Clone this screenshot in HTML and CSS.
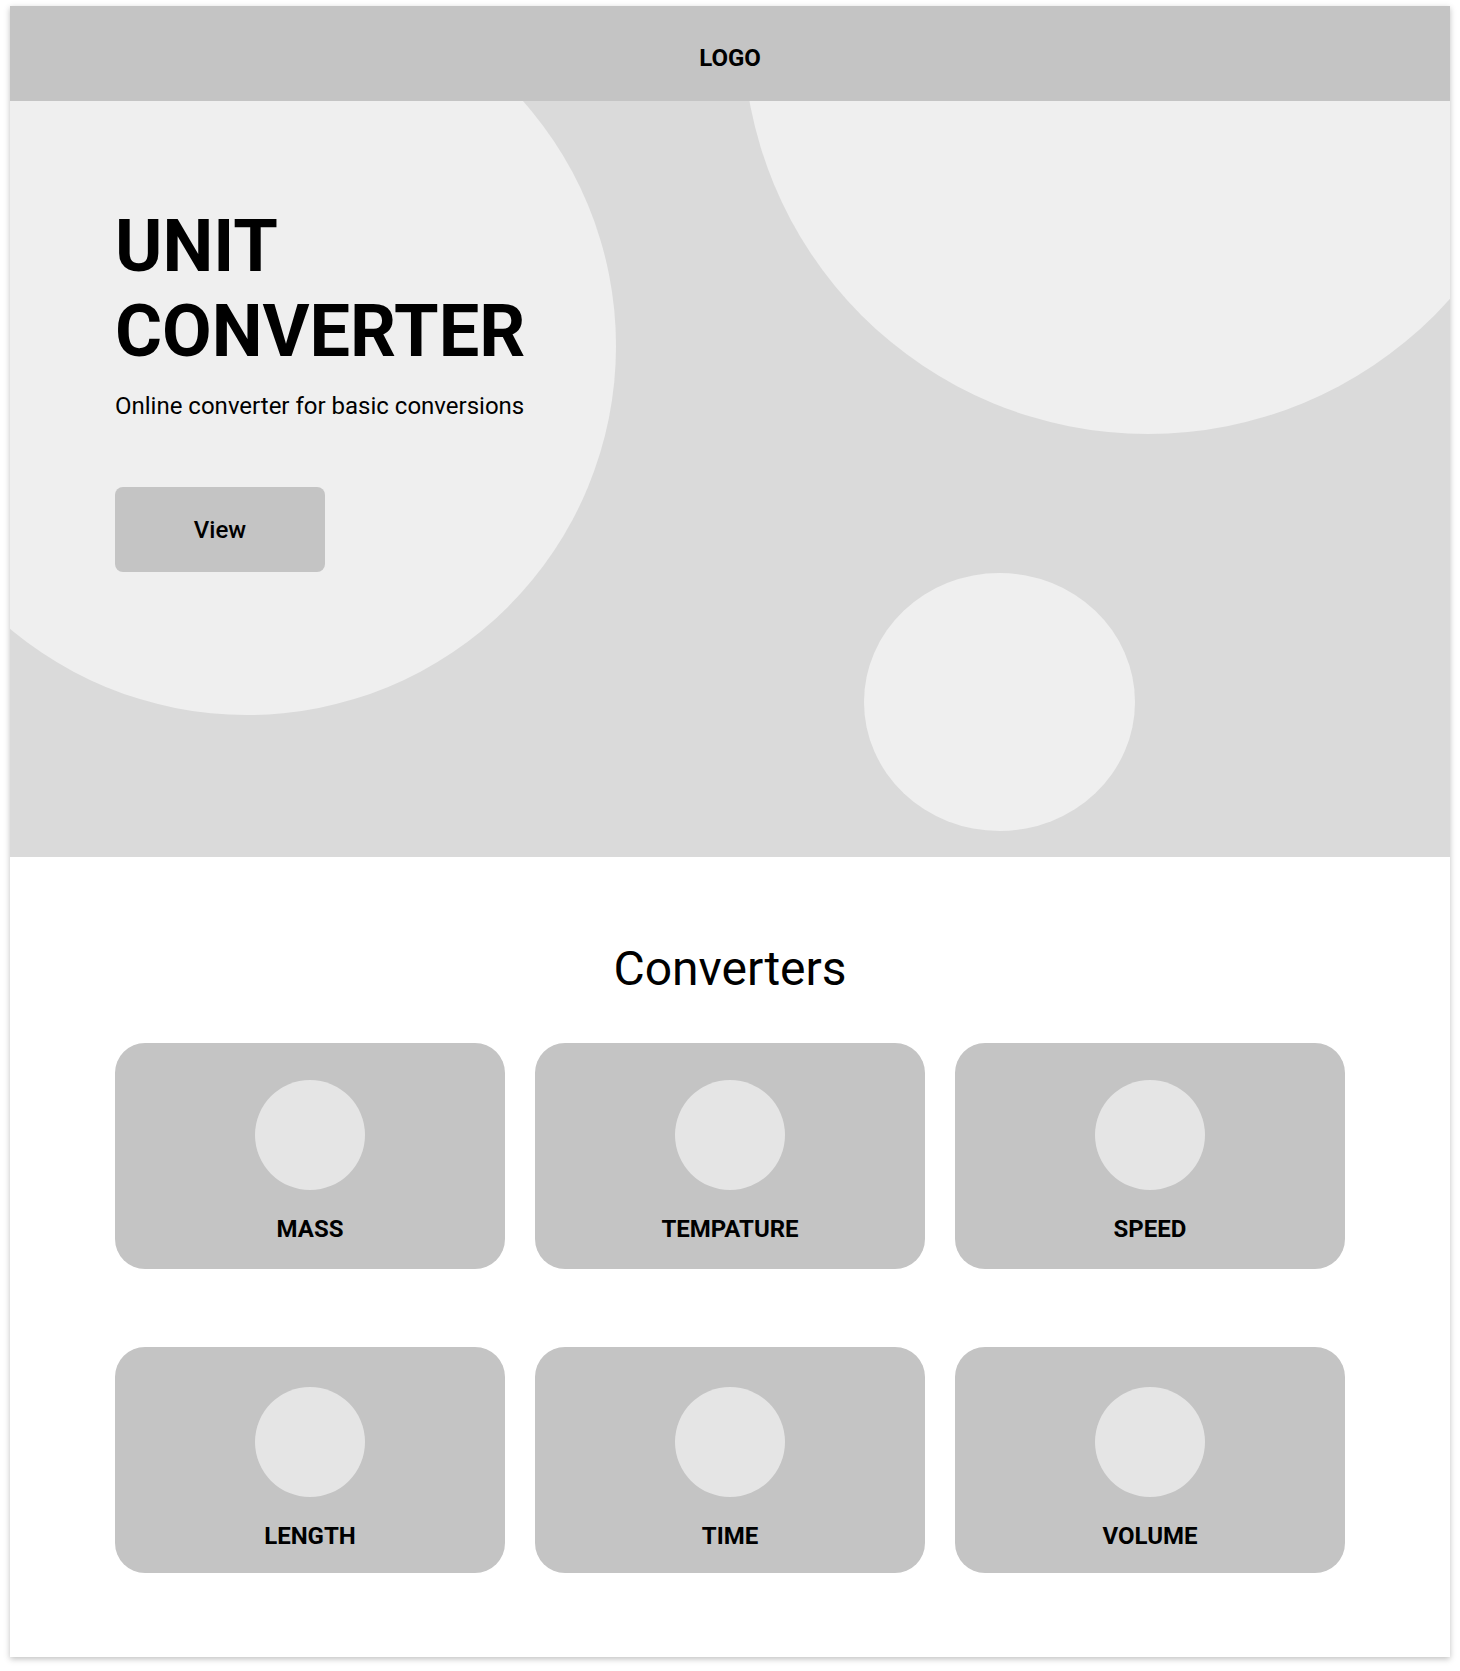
FILE: index.html
```html
<!DOCTYPE html>
<html lang="en">
<head>
    <meta charset="UTF-8">
    <meta name="viewport" content="width=device-width, initial-scale=1.0">
    <title>Unit Converter</title>
    <link rel="stylesheet" href="styles.css">
</head>
<body>
    <div class="page">
        <header class="topbar">
            <span class="logo">LOGO</span>
        </header>

        <section class="hero">
            <div class="blob blob-left"></div>
            <div class="blob blob-right"></div>
            <div class="blob blob-small"></div>

            <div class="hero-content">
                <h1 class="hero-title">UNIT<br>CONVERTER</h1>
                <p class="hero-sub">Online converter for basic conversions</p>
                <button class="hero-btn">View</button>
            </div>
        </section>

        <section class="converters">
            <h2 class="section-title">Converters</h2>
            <div class="card-grid">
                <div class="card"><div class="card-icon"></div><span class="card-label">MASS</span></div>
                <div class="card"><div class="card-icon"></div><span class="card-label">TEMPATURE</span></div>
                <div class="card"><div class="card-icon"></div><span class="card-label">SPEED</span></div>
                <div class="card"><div class="card-icon"></div><span class="card-label">LENGTH</span></div>
                <div class="card"><div class="card-icon"></div><span class="card-label">TIME</span></div>
                <div class="card"><div class="card-icon"></div><span class="card-label">VOLUME</span></div>
            </div>
        </section>
    </div>
</body>
</html>
```

FILE: styles.css
```css
body {
    margin: 0;
    padding: 6px 10px 14px;
    background: #fff;
    font-family: Roboto, "Liberation Sans", Arial, sans-serif;
    color: #000;
}

.page {
    width: 1440px;
    background: #fff;
    box-shadow: 0 2px 6px rgba(0, 0, 0, 0.25);
}

.topbar {
    height: 95px;
    background-color: #c4c4c4;
    display: flex;
    align-items: center;
    justify-content: center;
}

.logo {
    font-size: 24px;
    font-weight: 700;
    line-height: 28px;
    margin-top: 8px;
}

.hero {
    position: relative;
    height: 756px;
    background-color: #dadada;
    overflow: hidden;
}

.blob {
    position: absolute;
    background-color: #efefef;
    border-radius: 50%;
}

.blob-left {
    left: -132px;
    top: -124px;
    width: 738px;
    height: 738px;
}

.blob-right {
    left: 733px;
    top: -477px;
    width: 810px;
    height: 810px;
}

.blob-small {
    left: 854px;
    top: 472px;
    width: 271px;
    height: 258px;
}

.hero-content {
    position: relative;
    padding: 103px 0 0 105px;
}

.hero-title {
    margin: 0;
    font-size: 72px;
    line-height: 85px;
    font-weight: 700;
}

.hero-sub {
    margin: 18px 0 0;
    font-size: 24px;
    line-height: 28px;
}

.hero-btn {
    display: block;
    margin-top: 67px;
    width: 210px;
    height: 85px;
    border: none;
    border-radius: 8px;
    background-color: #c4c4c4;
    font-family: inherit;
    font-size: 24px;
    font-weight: 500;
    color: #000;
}

.converters {
    padding: 84px 105px 84px;
}

.section-title {
    margin: 0 0 46px;
    text-align: center;
    font-size: 48px;
    line-height: 56px;
    font-weight: 400;
}

.card-grid {
    display: grid;
    grid-template-columns: repeat(3, 1fr);
    column-gap: 30px;
    row-gap: 78px;
}

.card {
    height: 226px;
    background-color: #c4c4c4;
    border-radius: 30px;
    display: flex;
    flex-direction: column;
    align-items: center;
    padding-top: 37px;
    box-sizing: border-box;
}

.card:nth-child(n+4) {
    padding-top: 40px;
}

.card-icon {
    width: 110px;
    height: 110px;
    border-radius: 50%;
    background-color: #e5e5e5;
}

.card-label {
    margin-top: 25px;
    font-size: 24px;
    line-height: 28px;
    font-weight: 700;
}
```
